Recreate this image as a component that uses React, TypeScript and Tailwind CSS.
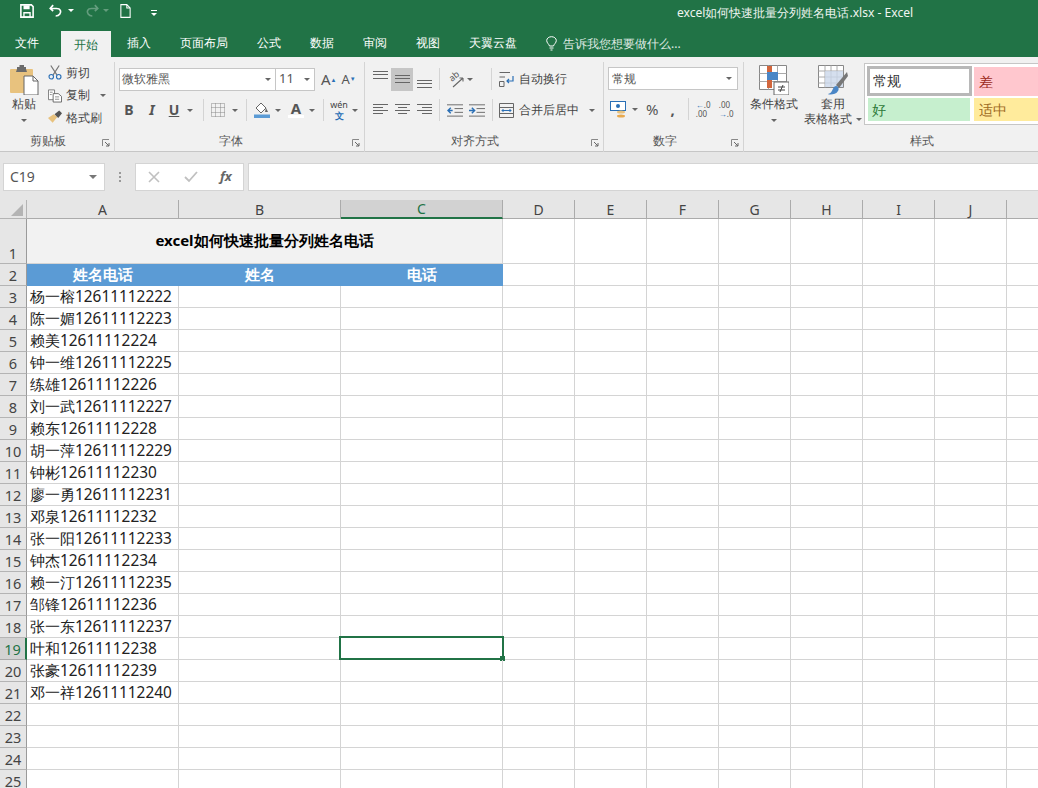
import type { ReactNode } from 'react'

const rows = [
  '杨一榕12611112222', '陈一媚12611112223', '赖美12611112224', '钟一维12611112225', '练雄12611112226',
  '刘一武12611112227', '赖东12611112228', '胡一萍12611112229', '钟彬12611112230', '廖一勇12611112231',
  '邓泉12611112232', '张一阳12611112233', '钟杰12611112234', '赖一汀12611112235', '邹锋12611112236',
  '张一东12611112237', '叶和12611112238', '张豪12611112239', '邓一祥12611112240', '', '', '', '',
]

const colHeads = [
  { label: 'A', cls: 'w-[152px]' },
  { label: 'B', cls: 'w-[162px]' },
  { label: 'C', cls: 'w-[162px]' },
  { label: 'D', cls: 'w-[72px]' },
  { label: 'E', cls: 'w-[72px]' },
  { label: 'F', cls: 'w-[72px]' },
  { label: 'G', cls: 'w-[72px]' },
  { label: 'H', cls: 'w-[72px]' },
  { label: 'I', cls: 'w-[72px]' },
  { label: 'J', cls: 'w-[72px]' },
  { label: '', cls: 'w-[32px]' },
]

function Caret({ className = '' }: { className?: string }) {
  return <span className={'inline-block w-0 h-0 border-x-[3px] border-x-transparent border-t-[3px] border-t-[#666] ' + className} />
}

function Launcher() {
  return (
    <svg width="8" height="8" viewBox="0 0 8 8" className="shrink-0 mt-[4px]">
      <path d="M0.5 7V0.5H7" fill="none" stroke="#888" />
      <path d="M3 3L7 7M7 4V7H4" fill="none" stroke="#666" />
    </svg>
  )
}

function Sep() {
  return <div className="w-px h-[22px] bg-[#d4d4d4] shrink-0" />
}

function Group({ label, width, children }: { label: string; width: string; children: ReactNode }) {
  return (
    <div className={'flex flex-col shrink-0 h-[90px] border-r border-[#d4d4d4] ' + width}>
      <div className="h-[72px]">{children}</div>
      <div className="flex items-center pr-[4px] h-[18px] mt-[-2px]">
        <span className="flex-1 pr-[6px] text-center text-[12px] leading-none text-[#555]">{label}</span>
        <Launcher />
      </div>
    </div>
  )
}

function Lines({ kind }: { kind: string }) {
  const rowsOf: Record<string, number[][]> = {
    top: [[0, 15, 3], [0, 15, 6], [0, 15, 10]],
    mid: [[0, 15, 7], [0, 15, 10], [0, 15, 14]],
    bot: [[0, 15, 12], [0, 15, 15], [0, 15, 19]],
    left: [[0, 15, 4], [0, 10, 7], [0, 15, 10], [0, 10, 13]],
    center: [[0, 15, 4], [3, 12, 7], [0, 15, 10], [3, 12, 13]],
    right: [[0, 15, 4], [5, 15, 7], [0, 15, 10], [5, 15, 13]],
  }
  return (
    <svg width="15" height="20" viewBox="0 0 15 20">
      {rowsOf[kind].map(([a, b, y]) => (
        <path key={y} d={`M${a} ${y}.5H${b}`} stroke="#666" />
      ))}
    </svg>
  )
}

function Indent({ flip }: { flip?: boolean }) {
  return (
    <svg width="16" height="14" viewBox="0 0 17 14">
      <path d="M0 1.5H17M8 5.5H17M8 9.5H17M0 13.5H17" stroke="#666" />
      {flip ? (
        <path d="M0 7.5H5M3 4.5L6 7.5L3 10.5" fill="none" stroke="#2a6fb5" strokeWidth="1.5" />
      ) : (
        <path d="M6 7.5H1M4 4.5L1 7.5L4 10.5" fill="none" stroke="#2a6fb5" strokeWidth="1.5" />
      )}
    </svg>
  )
}

function ClipboardGroup() {
  return (
    <div className="flex pl-[8px]">
      <div className="flex flex-col items-center w-[32px]">
        <svg width="29" height="30" viewBox="0 0 29 30" className="mt-[3px]">
          <rect x="0" y="4" width="23" height="24" rx="1" fill="#e8c27e" />
          <path d="M7 4V2H9.5V0H14V2H16V4L17 7H6Z" fill="#6b6b6b" />
          <path d="M14 11H23L28 16V30H14Z" fill="#fff" stroke="#666" />
          <path d="M23 11V16H28" fill="none" stroke="#666" />
        </svg>
        <span className="text-[12px] leading-none mt-[3px] text-[#444]">粘贴</span>
        <Caret className="mt-[9px]" />
      </div>
      <div className="flex flex-col pl-[8px] -mt-[1px] text-[12px] text-[#444] leading-none">
        <div className="flex items-center h-[23px] gap-[4px]">
          <svg width="14" height="15" viewBox="0 0 15 15">
            <path d="M3 0L9.5 10M12 0L5.5 10" stroke="#777" strokeWidth="1.3" />
            <circle cx="3.5" cy="12" r="2.4" fill="none" stroke="#2a6fb5" strokeWidth="1.2" />
            <circle cx="11.5" cy="12" r="2.4" fill="none" stroke="#2a6fb5" strokeWidth="1.2" />
          </svg>
          剪切
        </div>
        <div className="flex items-center h-[22px] gap-[4px]">
          <svg width="14" height="15" viewBox="0 0 15 15">
            <path d="M0.5 1.5H7V12H0.5Z" fill="#fff" stroke="#777" />
            <path d="M5.5 5.5H11L14.5 8.5V14.5H5.5Z" fill="#fff" stroke="#666" />
            <path d="M2 4H5M2 6.5H4M7.5 9H12M7.5 11.5H12" stroke="#888" />
          </svg>
          复制
          <Caret className="ml-[6px]" />
        </div>
        <div className="flex items-center h-[23px] gap-[4px]">
          <svg width="14" height="15" viewBox="0 0 15 15">
            <path d="M0 8L5 13L10 7L6 4Z" fill="#e8c27e" />
            <path d="M7 4L11 8L15 3L12 0Z" fill="#555" />
          </svg>
          格式刷
        </div>
      </div>
    </div>
  )
}

function FontGroup() {
  return (
    <div className="flex flex-col pl-[4px] pt-[5px]">
      <div className="flex items-center h-[24px] text-[12px] text-[#555]">
        <div className="flex items-center justify-between w-[157px] h-[23px] bg-white border border-[#c6c6c6] pl-[2px] pr-[4px]">
          微软雅黑
          <Caret />
        </div>
        <div className="flex items-center justify-between w-[39px] h-[23px] bg-white border border-l-0 border-[#c6c6c6] pl-[3px] pr-[4px] text-[13px]">
          11
          <Caret />
        </div>
        <span className="ml-[6px] text-[15px] leading-none font-['Liberation_Sans']">A<sup className="text-[6px] text-[#2a6fb5]">▲</sup></span>
        <span className="ml-[5px] text-[13px] leading-none font-['Liberation_Sans']">A<sup className="text-[6px] text-[#2a6fb5]">▼</sup></span>
      </div>
      <div className="flex items-center h-[24px] mt-[7px] text-[#555] font-['Liberation_Sans'] text-[14px] leading-none">
        <span className="w-[20px] text-center font-bold">B</span>
        <span className="w-[22px] ml-[2px] text-center italic font-['Liberation_Serif'] font-bold">I</span>
        <span className="w-[22px] text-center font-bold underline">U</span>
        <Caret className="ml-[2px]" />
        <div className="ml-[10px]"><Sep /></div>
        <svg width="14" height="14" viewBox="0 0 14 14" className="ml-[7px]">
          <path d="M.5 .5H13.5V13.5H.5ZM4.5 .5V13.5M9.5 .5V13.5M.5 4.5H13.5M.5 9.5H13.5" fill="none" stroke="#888" strokeDasharray="1 1" />
        </svg>
        <Caret className="ml-[7px]" />
        <div className="ml-[8px]"><Sep /></div>
        <svg width="16" height="16" viewBox="0 0 16 16" className="ml-[7px]">
          <path d="M2 6L7 1L12 6L7 11Z" fill="#fff" stroke="#666" />
          <path d="M12 6L14 10H11Z" fill="#666" />
          <rect x="0" y="12.5" width="16" height="3.5" fill="#5b9bd5" />
        </svg>
        <Caret className="ml-[5px]" />
        <div className="ml-[7px] flex flex-col items-center w-[16px]">
          <span className="font-bold text-[15px] leading-[13px]">A</span>
          <span className="w-[16px] h-[3px] bg-white" />
        </div>
        <Caret className="ml-[5px]" />
        <div className="ml-[8px]"><Sep /></div>
        <div className="ml-[7px] flex flex-col items-center w-[16px] gap-px">
          <span className="text-[9px] leading-[10px] text-[#444]">wén</span>
          <span className="text-[9px] leading-[10px] font-bold text-[#2a6fb5] font-['Noto_Sans_CJK_SC']">文</span>
        </div>
        <Caret className="ml-[5px]" />
      </div>
    </div>
  )
}

function AlignGroup() {
  return (
    <div className="flex flex-col pl-[4px] pt-[5px]">
      <div className="flex items-center h-[24px]">
        <div className="w-[22px] h-[23px] flex justify-center"><Lines kind="top" /></div>
        <div className="w-[22px] h-[23px] flex justify-center bg-[#c6c6c6]"><Lines kind="mid" /></div>
        <div className="w-[22px] h-[23px] flex justify-center"><Lines kind="bot" /></div>
        <div className="ml-[4px]"><Sep /></div>
        <svg width="17" height="17" viewBox="0 0 17 17" className="ml-[7px] overflow-visible">
          <text x="5" y="11" fontSize="9" fill="#555" transform="rotate(-40 5 11)">ab</text>
          <path d="M6 16L16 7M16 7H12.5M16 7V10.5" fill="none" stroke="#666" strokeWidth="1.1" />
        </svg>
        <Caret className="ml-[3px]" />
        <div className="ml-[18px]"><Sep /></div>
        <svg width="15" height="15" viewBox="0 0 15 15" className="ml-[7px]">
          <path d="M.5 .5H11M.5 5H6M.5 9.5H5V14.5H.5Z" fill="none" stroke="#666" />
          <path d="M14 4V9H8M10 7L8 9L10 11" fill="none" stroke="#2a6fb5" strokeWidth="1.2" />
        </svg>
        <span className="ml-[5px] text-[12px] text-[#444]">自动换行</span>
      </div>
      <div className="flex items-center h-[24px] mt-[7px]">
        <div className="w-[22px] flex justify-center"><Lines kind="left" /></div>
        <div className="w-[22px] flex justify-center"><Lines kind="center" /></div>
        <div className="w-[22px] flex justify-center"><Lines kind="right" /></div>
        <div className="ml-[4px]"><Sep /></div>
        <div className="ml-[7px] flex gap-[6px]"><Indent /><Indent flip /></div>
        <div className="ml-[7px]"><Sep /></div>
        <svg width="15" height="15" viewBox="0 0 15 15" className="ml-[6px]">
          <path d="M.5 .5H14.5V14.5H.5ZM.5 4.5H14.5M.5 10.5H14.5" fill="none" stroke="#666" />
          <path d="M3 7.5H12M4.5 6L3 7.5L4.5 9M10.5 6L12 7.5L10.5 9" fill="none" stroke="#2a6fb5" />
        </svg>
        <span className="ml-[5px] text-[12px] text-[#444]">合并后居中</span>
        <Caret className="ml-[10px]" />
      </div>
    </div>
  )
}

function NumberGroup() {
  return (
    <div className="flex flex-col pl-[4px] pt-[5px]">
      <div className="flex items-center justify-between w-[130px] h-[23px] bg-white border border-[#c6c6c6] pl-[3px] pr-[5px] text-[12px] text-[#555]">
        常规
        <Caret />
      </div>
      <div className="flex items-center h-[24px] mt-[7px] text-[#555]">
        <svg width="17" height="17" viewBox="0 0 17 17" className="ml-[2px]">
          <rect x=".5" y=".5" width="15" height="9" fill="#fff" stroke="#2a6fb5" />
          <circle cx="8" cy="5" r="2" fill="#2a6fb5" />
          <ellipse cx="11" cy="11" rx="4" ry="1.5" fill="#e8c27e" />
          <ellipse cx="11" cy="15" rx="4" ry="1.5" fill="#e8a94e" />
        </svg>
        <Caret className="ml-[5px]" />
        <span className="ml-[8px] text-[15px] font-['Liberation_Sans'] leading-none">%</span>
        <span className="ml-[12px] text-[15px] font-bold font-['Liberation_Serif'] leading-none">,</span>
        <div className="ml-[13px]"><Sep /></div>
        <div className="ml-[7px] w-[17px] text-[8px] leading-[9px] font-['Liberation_Sans'] whitespace-nowrap">
          <div><span className="text-[#2a6fb5]">←</span>.0</div>
          <div>.00</div>
        </div>
        <div className="ml-[6px] w-[17px] text-[8px] leading-[9px] font-['Liberation_Sans'] whitespace-nowrap">
          <div>.00</div>
          <div><span className="text-[#2a6fb5]">→</span>.0</div>
        </div>
      </div>
    </div>
  )
}

function StylesGroup() {
  return (
    <div className="flex pt-[6px]">
      <div className="flex flex-col items-center w-[60px] text-[12px] text-[#444] leading-none">
        <svg width="30" height="30" viewBox="0 0 30 30" className="mt-[2px]">
          <path d="M.5 .5H27.5V24.5H.5Z" fill="#fff" stroke="#888" />
          <path d="M.5 8.5H27.5M.5 16.5H27.5M9.5 .5V24.5M18.5 .5V24.5" stroke="#aaa" />
          <rect x="8" y="1" width="5" height="7" fill="#d2663c" />
          <rect x="8" y="7" width="11" height="8" fill="#4a86c6" />
          <rect x="8" y="15" width="5" height="8" fill="#d2663c" />
          <rect x="15" y="17" width="15" height="13" fill="#fff" stroke="#666" />
          <path d="M19 22H26M19 25H26M24 20L21 27" stroke="#444" />
        </svg>
        <span className="mt-[3px]">条件格式</span>
        <Caret className="mt-[9px]" />
      </div>
      <div className="flex flex-col items-center w-[58px] mr-[2px] text-[12px] text-[#444] leading-none">
        <svg width="30" height="31" viewBox="0 0 30 31" className="mt-[2px]">
          <path d="M.5 .5H25.5V22.5H.5Z" fill="#fff" stroke="#888" />
          <path d="M.5 6H25.5M.5 12H25.5M.5 18H25.5M7 .5V22.5M13 .5V22.5M19 .5V22.5" stroke="#aaa" />
          <rect x="7" y="6" width="18" height="16" fill="#cbd7ea" opacity=".8" />
          <path d="M29 7L18 20L21 23L30 11Z" fill="#777" />
          <path d="M16 22C19 19 22 23 20 26C18 30 11 30 10 29C14 28 14 25 16 22Z" fill="#4a86c6" />
        </svg>
        <span className="mt-[2px]">套用</span>
        <span className="mt-[3px] whitespace-nowrap">表格格式 <Caret className="align-middle" /></span>
      </div>
      <div className="grid grid-cols-[110px_70px] grid-rows-[34px_28px] w-[174px] h-[62px] bg-white border border-[#c6c6c6] border-r-0 text-[14px] leading-none">
        <div className="flex items-center pl-[3px] m-[2px] mr-[3px] mb-[2px] border-[3px] border-[#b8b8b8] text-[#333]">常规</div>
        <div className="flex items-center pl-[5px] mt-[3px] mb-[2px] -ml-[1px] bg-[#ffc7ce] text-[#9c2a20]">差</div>
        <div className="flex items-center pl-[4px] ml-[3px] mr-[5px] mb-[5px] bg-[#c6efce] text-[#2f7a3a]">好</div>
        <div className="flex items-center pl-[5px] -ml-[1px] mb-[5px] bg-[#ffeb9c] text-[#9c6a1e]">适中</div>
      </div>
    </div>
  )
}

function SheetRow({ n, text }: { n: number; text: string }) {
  const active = n === 19
  return (
    <div className="flex h-[22px]">
      <div className={'w-[27px] shrink-0 flex items-end justify-center text-[14.5px] leading-[19px] border-b border-r ' + (active ? 'bg-[#d2d2d2] text-[#217346] border-b-[#a8a8a8] border-r-2 border-r-[#217346]' : 'bg-[#e6e6e6] text-[#444] border-b-[#b4b4b4] border-r-[#9a9a9a]')}>
        {n}
      </div>
      <div className="w-[152px] shrink-0 border-r border-b border-[#d4d4d4] pl-[3px] text-[15.4px] leading-[21px] text-[#222] whitespace-nowrap overflow-hidden">
        {text}
      </div>
      <div className="w-[162px] shrink-0 border-r border-b border-[#d4d4d4]" />
      <div className="relative w-[162px] shrink-0 border-r border-b border-[#d4d4d4]">
        {active && (
          <div className="absolute -left-[2px] -right-[2px] -top-[2px] -bottom-px border-2 border-[#217346]">
            <span className="absolute -right-[3px] -bottom-[3px] w-[5px] h-[5px] bg-[#217346]" />
          </div>
        )}
      </div>
      {colHeads.slice(3).map((c) => (
        <div key={c.label} className={c.cls + ' shrink-0 border-r border-b border-[#d4d4d4]'} />
      ))}
    </div>
  )
}

export default function App() {
  return (
    <div className="w-[1038px] h-[788px] overflow-hidden bg-white font-['Noto_Sans_CJK_SC','Noto_Sans',sans-serif]">
      <div className="h-[57px] bg-[#217346] text-white">
        <div className="flex items-start h-[28px] pl-[20px] pt-[3px]">
          <svg width="14" height="14" viewBox="0 0 16 16" className="mt-px">
            <path d="M1 1H13L15 3V15H1Z" fill="none" stroke="#fff" strokeWidth="1.8" />
            <path d="M4 1.5H11V6H4Z" fill="#fff" />
            <path d="M4.5 10H11.5V15H4.5Z" fill="none" stroke="#fff" strokeWidth="1.5" />
          </svg>
          <svg width="15" height="14" viewBox="0 0 18 16" className="ml-[15px] mt-px">
            <path d="M5 1L1.5 5L5 8" fill="none" stroke="#fff" strokeWidth="2" />
            <path d="M2 5H9C14 5 15 9 13 11.5C12 13 10 14 8 14" fill="none" stroke="#fff" strokeWidth="2" />
          </svg>
          <Caret className="ml-[4px] mt-[6px] !border-t-white" />
          <svg width="15" height="14" viewBox="0 0 18 16" className="ml-[10px] mt-px opacity-30">
            <path d="M13 1L16.5 5L13 8" fill="none" stroke="#fff" strokeWidth="2" />
            <path d="M16 5H9C4 5 3 9 5 11.5C6 13 8 14 10 14" fill="none" stroke="#fff" strokeWidth="2" />
          </svg>
          <Caret className="ml-[4px] mt-[6px] !border-t-white opacity-30" />
          <svg width="11" height="14" viewBox="0 0 12 16" className="ml-[11px] mt-px">
            <path d="M.7 .7H7.5L11.3 4.5V15.3H.7ZM7.5 .7V4.5H11.3" fill="none" stroke="#fff" strokeWidth="1.2" />
          </svg>
          <div className="ml-[20px] flex flex-col items-center gap-[2px] mt-[7px]">
            <span className="w-[6px] h-px bg-white" />
            <Caret className="!border-t-white" />
          </div>
          <span className="ml-[520px] text-[12.1px] leading-[20px] text-[#f0f5f1] whitespace-nowrap">excel如何快速批量分列姓名电话.xlsx - Excel</span>
        </div>
        <div className="flex items-end h-[29px] pl-[15px] gap-[29px] text-[12px] leading-none">
          <span className="pb-[8px]">文件</span>
          <span className="ml-[-7px] mr-[-13px] px-[13px] pt-[8px] pb-[8px] h-[26px] bg-[#f1f1f1] text-[#217346]">开始</span>
          <span className="pb-[8px]">插入</span>
          <span className="pb-[8px]">页面布局</span>
          <span className="pb-[8px]">公式</span>
          <span className="pb-[8px]">数据</span>
          <span className="pb-[8px]">审阅</span>
          <span className="pb-[8px]">视图</span>
          <span className="pb-[8px]">天翼云盘</span>
          <div className="flex items-center pb-[6px] text-[#dfe9e2]">
            <svg width="11" height="15" viewBox="0 0 11 15">
              <path d="M3.5 10C3 8 .7 7 .7 4.5C.7 2.2 3 .7 5.5 .7C8 .7 10.3 2.2 10.3 4.5C10.3 7 8 8 7.5 10ZM3.5 12H7.5M4.5 14H6.5" fill="none" stroke="#fff" />
            </svg>
            <span className="ml-[6px]">告诉我您想要做什么...</span>
          </div>
        </div>
      </div>

      <div className="flex h-[95px] bg-[#f1f1f1] border-b border-[#c6c6c6] pt-[5px]">
        <Group label="剪贴板" width="w-[115px]"><ClipboardGroup /></Group>
        <Group label="字体" width="w-[250px]"><FontGroup /></Group>
        <Group label="对齐方式" width="w-[239px]"><AlignGroup /></Group>
        <Group label="数字" width="w-[140px]"><NumberGroup /></Group>
        <div className="flex flex-col w-[294px] shrink-0 h-[90px] mt-[-5px]">
          <div className="h-[77px]"><StylesGroup /></div>
          <span className="pl-[61px] text-center text-[12px] leading-none text-[#555] mt-[3px]">样式</span>
        </div>
      </div>

      <div className="flex items-center h-[48px] bg-[#e6e6e6] pt-[1px]">
        <div className="flex items-center justify-between ml-[3px] w-[102px] h-[28px] bg-white border border-[#d4d4d4] pl-[6px] pr-[7px] text-[14px] text-[#555]">
          C19
          <span className="w-0 h-0 border-x-[4px] border-x-transparent border-t-[4px] border-t-[#777]" />
        </div>
        <div className="flex flex-col gap-[2px] ml-[14px] w-[2px]">
          <span className="w-[2px] h-[2px] bg-[#999]" />
          <span className="w-[2px] h-[2px] bg-[#999]" />
          <span className="w-[2px] h-[2px] bg-[#999]" />
        </div>
        <div className="flex items-center ml-[14px] w-[109px] h-[28px] bg-white border border-[#d4d4d4] text-[#bbb]">
          <svg width="12" height="12" viewBox="0 0 12 12" className="ml-[12px]">
            <path d="M1 1L11 11M11 1L1 11" stroke="#c0c0c0" strokeWidth="1.6" />
          </svg>
          <svg width="14" height="12" viewBox="0 0 14 12" className="ml-[24px]">
            <path d="M1 6L5 10L13 1" fill="none" stroke="#c0c0c0" strokeWidth="1.8" />
          </svg>
          <span className="ml-[22px] text-[13px] italic font-bold font-['Liberation_Serif'] text-[#666]">fx</span>
        </div>
        <div className="flex-1 ml-[4px] h-[28px] bg-white border border-r-0 border-[#d4d4d4]" />
      </div>

      <div className="flex h-[19px]">
        <div className="flex items-end justify-end w-[27px] shrink-0 bg-[#e6e6e6] border-r border-b border-[#b4b4b4] pr-[3px] pb-[2px]">
          <span className="w-0 h-0 border-l-[12px] border-l-transparent border-b-[12px] border-b-[#b4b4b4]" />
        </div>
        {colHeads.map((c) => (
          <div
            key={c.label}
            className={
              c.cls + ' shrink-0 flex items-center justify-center pt-px text-[14px] leading-none border-r ' +
              (c.label === 'C' ? 'bg-[#d2d2d2] text-[#217346] border-b-2 border-b-[#217346] border-r-[#ababab]' : 'bg-[#e6e6e6] text-[#444] border-b border-b-[#ababab] border-r-[#ababab]')
            }
          >
            {c.label}
          </div>
        ))}
      </div>

      <div className="flex h-[45px]">
        <div className="w-[27px] shrink-0 flex items-end justify-center bg-[#e6e6e6] border-r border-b border-r-[#9a9a9a] border-b-[#b4b4b4] text-[14.5px] leading-[19px] text-[#444]">1</div>
        <div className="w-[476px] shrink-0 flex items-center justify-center pb-[2px] bg-[#f2f2f2] border-r border-b border-[#d4d4d4] text-[15px] font-bold text-black">
          excel如何快速批量分列姓名电话
        </div>
        {colHeads.slice(3).map((c) => (
          <div key={c.label} className={c.cls + ' shrink-0 border-r border-b border-[#d4d4d4]'} />
        ))}
      </div>

      <div className="flex h-[22px]">
        <div className="w-[27px] shrink-0 flex items-end justify-center bg-[#e6e6e6] border-r border-b border-r-[#9a9a9a] border-b-[#b4b4b4] text-[14.5px] leading-[19px] text-[#444]">2</div>
        {['姓名电话', '姓名', '电话'].map((h, i) => (
          <div key={h} className={(i === 0 ? 'w-[152px]' : 'w-[162px]') + ' shrink-0 flex items-center justify-center pb-[2px] bg-[#5b9bd5] text-white text-[15px] font-bold leading-none'}>
            {h}
          </div>
        ))}
        {colHeads.slice(3).map((c) => (
          <div key={c.label} className={c.cls + ' shrink-0 border-r border-b border-[#d4d4d4]'} />
        ))}
      </div>

      {rows.map((text, i) => (
        <SheetRow key={i} n={i + 3} text={text} />
      ))}
    </div>
  )
}
